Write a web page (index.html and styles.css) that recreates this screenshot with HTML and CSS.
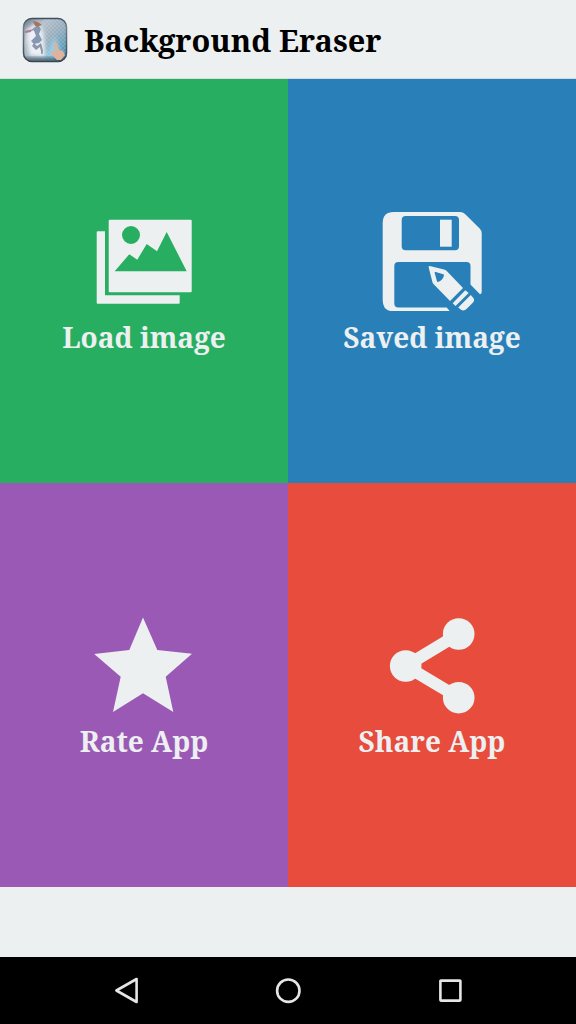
FILE: index.html
```html
<!DOCTYPE html>
<html lang="en">
<head>
<meta charset="utf-8">
<title>Background Eraser</title>
<link rel="stylesheet" href="styles.css">
</head>
<body>
<header class="bar">
  <svg class="logo" viewBox="0 0 46 46">
    <defs>
      <linearGradient id="sky" x1="0" y1="0" x2="1" y2="1"><stop offset="0" stop-color="#65717e"/><stop offset=".3" stop-color="#b4bfcb"/><stop offset=".55" stop-color="#97adbc"/><stop offset=".8" stop-color="#5b9bbb"/><stop offset="1" stop-color="#315f7c"/></linearGradient>
      <linearGradient id="edge" x1="0" y1="0" x2="0" y2="1"><stop offset="0" stop-color="#3c4f5d"/><stop offset=".2" stop-color="#71808c"/><stop offset="1" stop-color="#394750"/></linearGradient>
      <pattern id="check" width="4" height="4" patternUnits="userSpaceOnUse"><path d="M0 0h2v2h2v2H2V2H0z" fill="#fff" opacity=".12"/></pattern>
      <filter id="soft" x="-30%" y="-30%" width="160%" height="160%"><feGaussianBlur stdDeviation="2"/></filter>
      <filter id="fine"><feGaussianBlur stdDeviation=".35"/></filter>
      <clipPath id="tile"><rect x="1" y="1" width="44" height="44" rx="9"/></clipPath>
    </defs>
    <g clip-path="url(#tile)">
      <rect width="46" height="46" fill="url(#sky)"/>
      <path d="M4 13L16 5 21 15 24 41 7 39z" fill="#edf0f7" filter="url(#soft)"/>
      <rect x="20" width="26" height="46" fill="url(#check)"/>
      <path d="M33 19L38 34 31 43 23 40 28 29z" fill="#a5def5" opacity=".7" filter="url(#soft)"/>
      <path d="M0 41h46v5H0z" fill="#34424c" opacity=".7" filter="url(#soft)"/>
    </g>
    <g filter="url(#fine)">
      <path d="M11 4l5 1 4 3-3 1 1 2-4-1-2-3z" fill="#a5745e"/>
      <path d="M3 15l7-2 6-2M19 28l1 9" fill="none" stroke="#a9938f" stroke-width="1.500"/>
      <path d="M11 11l5-2 3 3-2 5 3 6-3 3-5 1-3-3 5-5z" fill="#8697b2"/>
      <path d="M12 26l3 3 4-3 2 8-1 3-2-7-4 3-4-4z" fill="#8b98ab"/>
      <path d="M3 15l6-1" stroke="#ac7b9d" stroke-width="2"/>
      <path d="M32 25q2-1 3 2l2 6 4 1 2 4-4 5h-4l-5-5-2-3 2-1 3 2z" fill="#deb39d"/>
    </g>
    <rect x="1.500" y="1.500" width="43" height="43" rx="8.500" fill="none" stroke="url(#edge)" stroke-width="1.500"/>
  </svg>
  <h1 class="title">Background Eraser</h1>
</header>
<main class="grid">
  <section class="tile load">
    <svg class="icon" viewBox="0 0 100 100">
      <path fill-rule="evenodd" d="M15.700 8.700h81q1 0 1 1v70.600q0 1-1 1h-81q-1 0-1-1V9.700q0-1 1-1zM37 15a9 9 0 1 0 0 18 9 9 0 1 0 0-18zM20.700 60.200h72L72.700 21 63 40.300 52.700 33 43.300 48.700 35.300 43.300z"/>
      <path d="M3.700 20.300H11v64h74.700v7.400q0 1-1 1h-81q-1 0-1-1V21.300q0-1 1-1z"/>
    </svg>
    <span class="label">Load image</span>
  </section>
  <section class="tile saved">
    <svg class="icon" viewBox="0 0 100 100">
      <path fill-rule="evenodd" d="M11.700 1H78q3 0 5 2l14.700 14.500q2 2 2 5V81q0 2-1.700 2.300L88.500 73.500V55q0-4-4-4H16.300q-4 0-4 4v37.500q0 4 4 4h48.400L68 100.300H11.700q-11 0-11-11V12q0-11 11-11zM23.700 5q-4 0-4 4v26.300q0 4 4 4H73q4 0 4-4V9q0-4-4-4z"/>
      <path d="M58 8.700h11.700v27H58z"/>
      <path fill-rule="evenodd" d="M47.800 55L62 58.400q1.500.4 2.500 1.400L81 77 68 90 51.700 73.300q-1-1-1.300-2.300L46.700 56.500q-.4-1.800 1.100-1.500zM52.700 62l2.500 9q3-.5 4.800-2.500 2-2 2-5L53.700 61q-1.300-.3-1 1z"/>
      <path d="M83.300 79.300l3.400 2.700-13.200 13-2.800-2.700zM88.700 84l2.300 2.500q2.200 2.500 0 5l-6 6q-3 3-6 1.300L76.200 96.500z"/>
    </svg>
    <span class="label">Saved image</span>
  </section>
  <section class="tile rate">
    <svg class="icon" viewBox="0 0 100 100"><path d="M49 2.500L63.300 35 98 38.700 71.700 61.700 79.300 97 49 78.300 19 97 26.700 61.700.2 39 35.300 35z"/></svg>
    <span class="label">Rate App</span>
  </section>
  <section class="tile share">
    <svg class="icon" viewBox="0 0 100 100">
      <path class="link" d="M76.700 19L23.700 51l53 31.700"/>
      <circle cx="76.700" cy="19" r="15.800"/><circle cx="23.700" cy="51" r="15.800"/><circle cx="76.700" cy="82.700" r="15.800"/>
    </svg>
    <span class="label">Share App</span>
  </section>
</main>
<nav class="nav">
  <svg class="key" viewBox="0 0 30 30"><path d="M5.400 14.500L25.600 3v23z"/></svg>
  <svg class="key" viewBox="0 0 30 30"><circle cx="15.300" cy="14.700" r="11.200"/></svg>
  <svg class="key" viewBox="0 0 30 30"><rect x="5.400" y="4.600" width="20" height="20" rx=".5"/></svg>
</nav>
</body>
</html>
```
FILE: styles.css
```css
body {
  margin: 0;
  height: 1024px;
  display: flex;
  flex-direction: column;
  background: #ecf0f1;
  font-family: "Noto Serif", "Droid Serif", "DejaVu Serif Condensed", "DejaVu Serif", serif;
  font-weight: 700;
}
.bar {
  box-sizing: border-box;
  height: 79px;
  padding: 2px 0 0 22px;
  display: flex;
  align-items: center;
  border-bottom: 1px solid #d3dde0;
}
.logo { width: 46px; height: 46px; }
.title {
  margin: 0 0 0 16px;
  font-size: 30.7px;
  line-height: 40px;
  color: #000;
  white-space: nowrap;
}
.grid {
  display: grid;
  grid-template-columns: 288px 288px;
  grid-template-rows: 404px 404px;
}
.tile {
  display: flex;
  flex-direction: column;
  align-items: center;
  padding-top: 132px;
  color: #ecf0f1;
}
.load { background: #27ae60; }
.saved { background: #2980b9; }
.rate { background: #9b59b6; }
.share { background: #e74c3c; }
.icon { width: 100px; height: 100px; fill: #ecf0f1; }
.link { fill: none; stroke: #ecf0f1; stroke-width: 12; }
.label {
  margin-top: 6px;
  font-size: 28px;
  line-height: 40px;
  white-space: nowrap;
}
.nav {
  height: 67px;
  margin-top: auto;
  padding: 0 111px;
  display: flex;
  align-items: center;
  justify-content: space-between;
  background: #000;
}
.key {
  width: 30px;
  height: 30px;
  fill: none;
  stroke: #e6e6e6;
  stroke-width: 2.6;
  stroke-linejoin: round;
}
```
